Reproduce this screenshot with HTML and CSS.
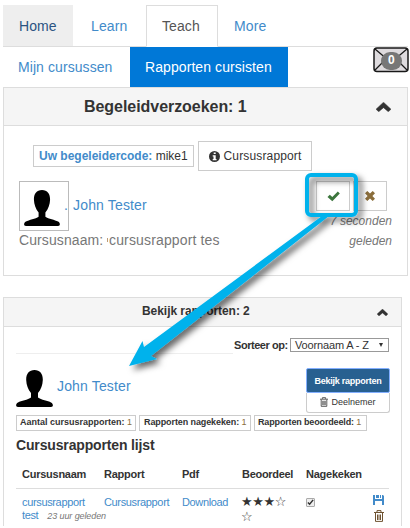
FILE: index.html
```html
<!DOCTYPE html>
<html lang="nl">
<head>
<meta charset="utf-8">
<title>Rapporten cursisten</title>
<link rel="stylesheet" href="styles.css">
</head>
<body>
<svg class="defs" width="0" height="0">
  <symbol id="person" viewBox="0 0 37 37"><path d="M18.500 0C13 0 10 4 10.200 10c.2 5 1.800 9.500 4.800 13v4.500C12 30 5 30.500 2 32.500-.5 34-.5 37 2 37h33c2.500 0 2.500-3 0-4.500-3-2-10-2.500-13-5V23c3-3.500 4.600-8 4.800-13C27 4 24 0 18.500 0Z"/></symbol>
  <symbol id="up" viewBox="0 0 14 9"><path d="M7 0 14 6.500 11.500 9 7 5.100 2.500 9 0 6.500Z" fill="#333" stroke="#333" stroke-width=".4"/></symbol>
  <symbol id="trash" viewBox="0 0 10 12"><path d="M0 2.500h10M3 2V.6h4V2M1.500 3v8.400h7V3M3.500 4.500v5.500M5 4.500v5.500M6.500 4.500v5.500" fill="none" stroke="currentColor"/></symbol>
</svg>
<nav class="tabs"><a class="tab home">Home</a><a class="tab">Learn</a><a class="tab active">Teach</a><a class="tab more">More</a></nav>
<nav class="subnav"><a class="mine">Mijn cursussen</a><a class="current">Rapporten cursisten</a>
  <span class="mail"><svg width="36" height="26" viewBox="0 0 36 26"><rect x="1" y="1" width="34" height="23.500" rx="3" fill="#dedbde" stroke="#181818" stroke-width="1.500"/><path d="M2 2l13 11q3 2 6 0L34 2M2 23l10-10M34 23L24 13" fill="none" stroke="#181818" stroke-width="1.300"/></svg><b class="count">0</b></span>
</nav>
<section class="panel requests">
  <header class="head"><h2>Begeleidverzoeken: 1</h2><svg class="up" width="15" height="10"><use href="#up"/></svg></header>
  <div class="codes"><span class="code"><b>Uw begeleidercode:</b> mike1</span><button class="info"><svg width="11" height="11" viewBox="0 0 11 11"><circle cx="5.500" cy="5.500" r="5.500" fill="#333"/><path d="M4.700 1.500h2v1.600h-2zM3.700 4.200h3v3.900h.8v1.200H3.700V8.100h.8V5.400h-.8z" fill="#fff"/></svg><span>Cursusrapport</span></button></div>
  <div class="request">
    <div class="who"><div class="person"><span class="frame"><svg width="38" height="36"><use href="#person"/></svg></span><a class="name">. <span>John Tester</span></a></div>
      <p class="course"><span class="label">Cursusnaam:</span><i class="tick"></i><span class="value">cursusrapport tes</span></p></div>
    <div class="side"><div class="actions"><button><svg width="13" height="11" viewBox="0 0 13 11"><path d="M.5 6 2.800 3.700l2.500 2.300L10.800.5 12.800 2.500 5.300 10.200Z" fill="#3c763d"/></svg></button><button><svg width="10" height="10" viewBox="0 0 10 10"><path d="M2.300 0 5 2.600 7.700 0 10 2.300 7.400 5 10 7.700 7.700 10 5 7.400 2.300 10 0 7.700 2.600 5 0 2.300Z" fill="#8a6d3b"/></svg></button></div>
    <p class="ago">7 seconden<br>geleden</p></div>
  </div>
</section>
<section class="panel reports">
  <header class="head"><h2>Bekijk rapporten: 2</h2><svg class="up" width="11" height="7"><use href="#up"/></svg></header>
  <div class="sort"><hr><label>Sorteer op:</label><span class="select"><span>Voornaam A - Z</span><i></i></span></div>
  <div class="student"><svg width="37" height="37"><use href="#person"/></svg><a class="name">John Tester</a>
    <div class="stack"><button class="view">Bekijk rapporten</button><button class="remove"><svg width="8" height="10"><use href="#trash"/></svg><span>Deelnemer</span></button></div></div>
  <div class="badges"><span>Aantal cursusrapporten: <em>1</em></span><span>Rapporten nagekeken: <em>1</em></span><span>Rapporten beoordeeld: <em>1</em></span></div>
  <h3>Cursusrapporten lijst</h3>
  <div class="row titles"><b class="c1">Cursusnaam</b><b class="c2">Rapport</b><b>Pdf</b><b class="c4">Beoordeel</b><b class="c5">Nagekeken</b></div>
  <div class="row data"><div class="c1"><a>cursusrapport<br>test</a><span class="time">23 uur geleden</span></div><a class="c2">Cursusrapport</a><a class="c3">Download</a><div class="stars">★★★☆<br>☆</div>
    <span class="check"><svg width="8" height="8" viewBox="0 0 8 8"><path d="M1 4l2 2 4-5" fill="none" stroke="#333" stroke-width="1.700"/></svg></span>
    <div class="tools"><svg width="11" height="10" viewBox="0 0 11 10"><path d="M0 0h2v4h7V0h1l1 1v9H9V6H2v4H0zM3 0h3v3H3zM7 0h1v3H7z" fill="#428bca"/></svg><svg class="bin" width="10" height="12"><use href="#trash"/></svg></div></div>
</section>
<svg class="callout" width="410" height="528" viewBox="0 0 410 528">
  <defs><filter id="shadow" x="-20%" y="-20%" width="140%" height="140%"><feDropShadow dx="4" dy="4" stdDeviation="3" flood-opacity=".6"/></filter></defs>
  <g filter="url(#shadow)"><rect x="307" y="175" width="49" height="40" rx="4" fill="none" stroke="#04b2ec" stroke-width="4"/><path d="M322 216 144 347 142.500 341 129 366 157 359 151 356 329 216Z" fill="#04b2ec"/></g>
</svg>
</body>
</html>
```
FILE: styles.css
```css
* { box-sizing: border-box; }
body { margin: 0; width: 410px; height: 528px; overflow: hidden; background: #fff; color: #333; font-family: "Liberation Sans", Arial, sans-serif; position: relative; }
h2, h3, p { margin: 0; }
svg { display: block; flex: none; }
.defs { position: absolute; }
a { color: #428bca; white-space: nowrap; }
button { font: inherit; color: #333; background: #fff; border: 1px solid #ccc; padding: 0; display: flex; align-items: center; justify-content: center; }
.tabs { display: flex; margin: 5px 2px 0 3px; height: 42px; border-bottom: 1px solid #ddd; font-size: 14px; line-height: 42px; letter-spacing: .1px; }
.tab { height: 42px; padding-left: 18px; width: 73px; }
.tab.home { width: 70px; padding-left: 16px; background: #eee; border-bottom: 1px solid #ddd; color: #2a5482; }
.tab.active { width: 72px; padding-left: 15px; border: 1px solid #ddd; border-bottom-color: #fff; background: #fff; color: #555; line-height: 40px; }
.tab.more { padding-left: 16px; }
.subnav { display: flex; height: 40px; margin-left: 3px; line-height: 40px; font-size: 14px; letter-spacing: .08px; }
.mine { width: 127px; padding-left: 15px; }
.current { width: 158px; background: #0078d7; color: #fff; padding-left: 15px; }
.mail { margin-left: 85px; position: relative; height: 26px; width: 36px; }
.count { position: absolute; left: 8px; top: 5px; width: 21px; height: 18px; border-radius: 9px; background: #777; color: #fff; font-size: 12px; line-height: 17px; text-align: center; }
.panel { border: 1px solid #ddd; margin-left: 3px; }
.requests { width: 405px; height: 189px; }
.head { display: flex; align-items: center; background: #f5f5f5; border-bottom: 1px solid #ddd; height: 38px; }
.head h2 { font-size: 16px; padding-left: 80px; flex: 1; letter-spacing: -.05px; }
.head .up { margin-right: 16px; }
.codes { display: flex; align-items: center; gap: 4px; margin: 15px 0 0 29px; height: 30px; font-size: 12px; white-space: nowrap; }
.code { width: 161px; height: 22px; border: 1px solid #ccc; line-height: 20px; padding-left: 5px; }
.code b { color: #428bca; }
.info { height: 30px; width: 114px; gap: 4px; letter-spacing: .15px; }
.request { display: flex; justify-content: space-between; margin: 10px 15px 0 15px; }
.person { display: flex; height: 50px; }
.frame { width: 50px; height: 50px; border: 1px solid #bbb; padding: 8px 0 0 3px; }
.name { font-size: 14px; letter-spacing: .15px; }
.person .name { margin: 15px 0 0 -5px; line-height: 18px; }
.person .name span { margin-left: 1px; }
.course { display: flex; font-size: 14px; line-height: 18px; color: #777; white-space: nowrap; }
.label { width: 88px; letter-spacing: .1px; }
.tick { width: 1px; height: 4px; background: #bc9b77; margin-top: 7px; }
.value { margin: 0 0 0 1px; letter-spacing: .15px; }
.side { width: 76px; }
.actions { display: flex; gap: 3px; }
.actions button { width: 34px; height: 30px; }
.ago { font-size: 12px; line-height: 20px; font-style: italic; color: #777; text-align: right; white-space: nowrap; }
.reports { width: 399px; height: 229px; border-bottom: 0; margin-top: 21px; padding: 0; overflow: hidden; }
.reports .head { height: 29px; }
.reports .head h2 { font-size: 12px; padding-left: 138px; margin-top: -3px; }
.reports .head .up { margin-right: 13px; }
.sort { display: flex; margin: 11px 12px 0; height: 16px; font-size: 11px; font-weight: bold; white-space: nowrap; }
.sort hr { width: 217px; margin: 15px 0 0; height: 1px; border: 0; background: #eee; }
.sort label { width: 57px; line-height: 14px; padding-left: 1px; letter-spacing: -.45px; }
.select { display: flex; align-items: center; justify-content: space-between; border: 1px solid #999; width: 99px; height: 14px; font-weight: normal; padding: 0 5px 0 4px; letter-spacing: -.15px; }
.select i { border: 2px solid transparent; border-top: 4px solid #333; border-bottom: 0; }
.student { display: flex; height: 45px; margin: 14px 12px 0; }
.student > svg { margin-top: 2px; }
.student .name { margin: 9px 0 0 4px; line-height: 18px; }
.stack { margin: 0 -1px 0 auto; width: 84px; font-size: 9px; }
.stack button { width: 84px; height: 20px; }
.stack .view { height: 25px; background: #286090; color: #fff; border-color: #83afff; border-radius: 2px; font-weight: bold; letter-spacing: -.25px; }
.stack .remove { gap: 3px; border-top: 0; border-radius: 0 0 3px 3px; padding-bottom: 2px; }
.badges { display: flex; gap: 3px; margin: 2px 12px 0; font-size: 9px; font-weight: bold; white-space: nowrap; }
.badges span { height: 16px; width: 120px; border: 1px solid #ccc; line-height: 13px; padding-left: 3px; }
.badges span:nth-child(2) { width: 112px; padding-left: 4px; letter-spacing: -.1px; }
.badges span:nth-child(3) { width: 113px; letter-spacing: -.15px; }
.badges em { font-style: normal; font-weight: normal; color: #8a6d3b; }
h3 { font-size: 14px; line-height: 18px; margin: 5px 12px 0; letter-spacing: -.15px; }
.row { display: grid; grid-template-columns: 82px 78px 59px 64px 70px 10px; margin: 0 12px; padding-left: 6px; }
.titles { height: 35px; font-size: 11px; line-height: 14px; padding-top: 13px; border-bottom: 1px solid #ddd; letter-spacing: -.3px; }
.data { padding-top: 7px; font-size: 11px; line-height: 13px; white-space: nowrap; letter-spacing: -.35px; }
.titles .c1, .titles .c2, .titles .c5 { letter-spacing: -.25px; }
.titles .c4, .titles .c5 { padding-left: 1px; }
.time { color: #777; font-style: italic; font-size: 9px; margin-left: 9px; letter-spacing: -.1px; }
.stars { font: 13px/15px "DejaVu Sans", sans-serif; margin-top: -2px; letter-spacing: -.4px; }
.check { border: 1px solid #aaa; border-radius: 1px; background: #eee; width: 9px; height: 9px; margin: 2px 0 0 1px; }
.check svg { width: 7px; height: 7px; }
.tools { display: grid; gap: 3px; color: #6f5331; margin-left: -2px; margin-top: -1px; }
.bin { margin-left: 1px; }
.callout { position: absolute; left: 0; top: 0; pointer-events: none; }
```
